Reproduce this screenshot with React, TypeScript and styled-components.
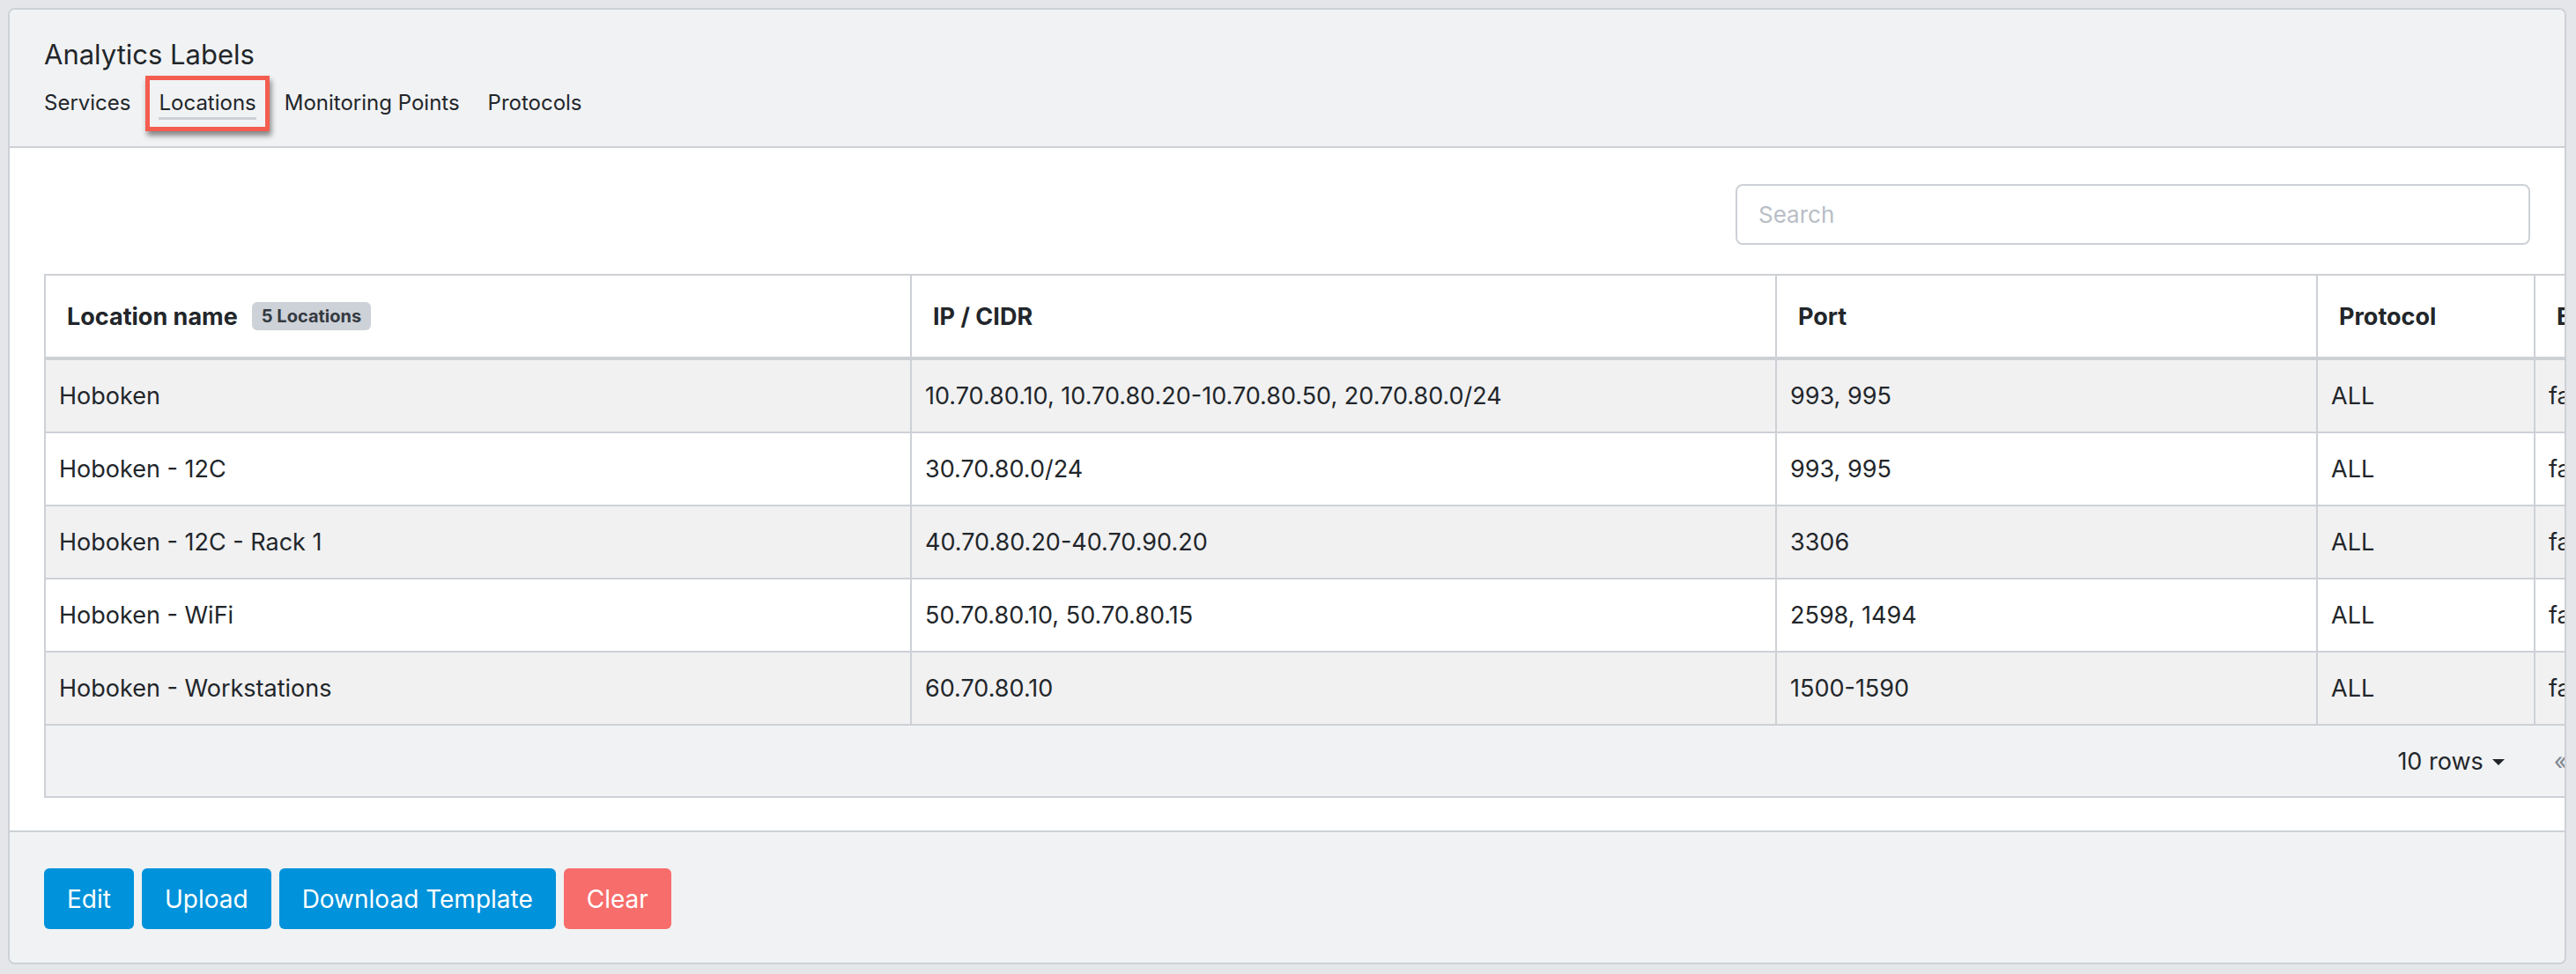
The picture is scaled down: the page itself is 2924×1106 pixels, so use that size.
import React from "react"
import styled, { createGlobalStyle } from "styled-components"

const Global = createGlobalStyle`
  html, body { margin: 0; padding: 0; background: #e4e6e9; }
  body { font-family: Inter, "Noto Sans", sans-serif; color: #212529; }
`

const Page = styled.div`
  padding: 9px 11px 11px 9px;
`

const Card = styled.div`
  background: #fff;
  border: 2px solid #cdd1d6;
  border-radius: 8px;
  overflow: hidden;
`

const Header = styled.div`
  background: #f1f2f4;
  border-bottom: 2px solid #cdd1d6;
  height: 157px;
  box-sizing: border-box;
  padding: 31px 0 0 39px;
`

const Title = styled.div`
  font-size: 31px;
  font-weight: 400;
  color: #22262a;
  line-height: 40px;
`

const Tabs = styled.div`
  display: flex;
  gap: 32px;
  margin-top: 20px;
`

const Tab = styled.div<{ $active?: boolean }>`
  font-size: 24px;
  line-height: 30px;
  color: #22262a;
  position: relative;
  padding-bottom: 4px;
  ${p => p.$active && `
    border-bottom: 3px solid #cdd1d6;
    padding-bottom: 1px;
    &::after {
      content: "";
      position: absolute;
      left: -15px; right: -15px; top: -16px; bottom: -16px;
      border: 5px solid #f45d4f;
      box-shadow: 2px 5px 6px rgba(0,0,0,0.45);
    }
  `}
`

const Body = styled.div`
  padding: 41px 39px 37px 39px;
`

const SearchRow = styled.div`
  display: flex;
  justify-content: flex-end;
  margin-bottom: 33px;
`

const Search = styled.input`
  width: 902px;
  height: 69px;
  box-sizing: border-box;
  border: 2px solid #cdd1d6;
  border-radius: 8px;
  padding: 0 24px;
  font-family: inherit;
  font-size: 26px;
  &::placeholder { color: #b8bec6; }
`

const Table = styled.table`
  width: 100%;
  table-layout: fixed;
  border-collapse: collapse;
  border: 2px solid #cdd1d6;
  font-size: 27px;
  td, th { border-left: 2px solid #cdd1d6; border-right: 2px solid #cdd1d6; }
`

const Th = styled.th<{ $w: number }>`
  width: ${p => p.$w}px;
  text-align: left;
  font-weight: 700;
  height: 92px;
  padding: 0 24px;
  border-bottom: 4px solid #cdd1d6;
  color: #22262a;
`

const Badge = styled.span`
  display: inline-block;
  background: #cdd1d8;
  color: #343a40;
  font-size: 20px;
  font-weight: 700;
  border-radius: 6px;
  padding: 4px 11px;
  margin-left: 16px;
  vertical-align: 3px;
`

const Tr = styled.tr<{ $odd: boolean }>`
  background: ${p => (p.$odd ? "#f1f1f2" : "#fff")};
  td { height: 81px; padding: 0 15px; border-bottom: 2px solid #cdd1d6; color: #22262a; }
`

const FootRow = styled.tr`
  background: #f1f2f4;
  td { height: 80px; padding: 0 64px 0 0; }
`

const Pager = styled.div`
  display: flex;
  justify-content: flex-end;
  align-items: center;
  gap: 24px;
  font-size: 27px;
  color: #22262a;
`

const Rows = styled.span`
  margin-right: 32px;
  &::after {
    content: "";
    display: inline-block;
    margin-left: 10px;
    vertical-align: 5px;
    border-left: 7px solid transparent;
    border-right: 7px solid transparent;
    border-top: 7px solid #22262a;
  }
`

const Nav = styled.span`
  color: #7d8791;
`

const Footer = styled.div`
  background: #f1f2f4;
  border-top: 2px solid #cdd1d6;
  padding: 41px 39px 38px;
  display: flex;
  gap: 9px;
`

const Button = styled.button<{ $danger?: boolean }>`
  height: 69px;
  padding: 0 26px;
  border: none;
  border-radius: 6px;
  background: ${p => (p.$danger ? "#f76d6b" : "#0092da")};
  color: #fff;
  font-family: inherit;
  font-size: 28px;
`

const rows = [
  ["Hoboken", "10.70.80.10, 10.70.80.20-10.70.80.50, 20.70.80.0/24", "993, 995"],
  ["Hoboken - 12C", "30.70.80.0/24", "993, 995"],
  ["Hoboken - 12C - Rack 1", "40.70.80.20-40.70.90.20", "3306"],
  ["Hoboken - WiFi", "50.70.80.10, 50.70.80.15", "2598, 1494"],
  ["Hoboken - Workstations", "60.70.80.10", "1500-1590"],
]

export default function App() {
  return (
    <Page>
      <Global />
      <Card>
        <Header>
          <Title>Analytics Labels</Title>
          <Tabs>
            <Tab>Services</Tab>
            <Tab $active>Locations</Tab>
            <Tab>Monitoring Points</Tab>
            <Tab>Protocols</Tab>
          </Tabs>
        </Header>
        <Body>
          <SearchRow>
            <Search placeholder="Search" />
          </SearchRow>
          <Table>
            <thead>
              <tr>
                <Th $w={933}>Location name<Badge>5 Locations</Badge></Th>
                <Th $w={932}>IP / CIDR</Th>
                <Th $w={564}>Port</Th>
                <Th $w={197}>Protocol</Th>
                <Th $w={196}>Exclude</Th>
              </tr>
            </thead>
            <tbody>
              {rows.map((r, i) => (
                <Tr key={r[0]} $odd={i % 2 === 0}>
                  <td>{r[0]}</td>
                  <td>{r[1]}</td>
                  <td>{r[2]}</td>
                  <td>ALL</td>
                  <td>false</td>
                </Tr>
              ))}
              <FootRow>
                <td colSpan={5}>
                  <Pager>
                    <Rows>10 rows</Rows>
                    <Nav>«</Nav>
                    <Nav>‹</Nav>
                    <span>1</span>
                    <Nav>›</Nav>
                    <Nav>»</Nav>
                  </Pager>
                </td>
              </FootRow>
            </tbody>
          </Table>
        </Body>
        <Footer>
          <Button>Edit</Button>
          <Button>Upload</Button>
          <Button>Download Template</Button>
          <Button $danger>Clear</Button>
        </Footer>
      </Card>
    </Page>
  )
}
